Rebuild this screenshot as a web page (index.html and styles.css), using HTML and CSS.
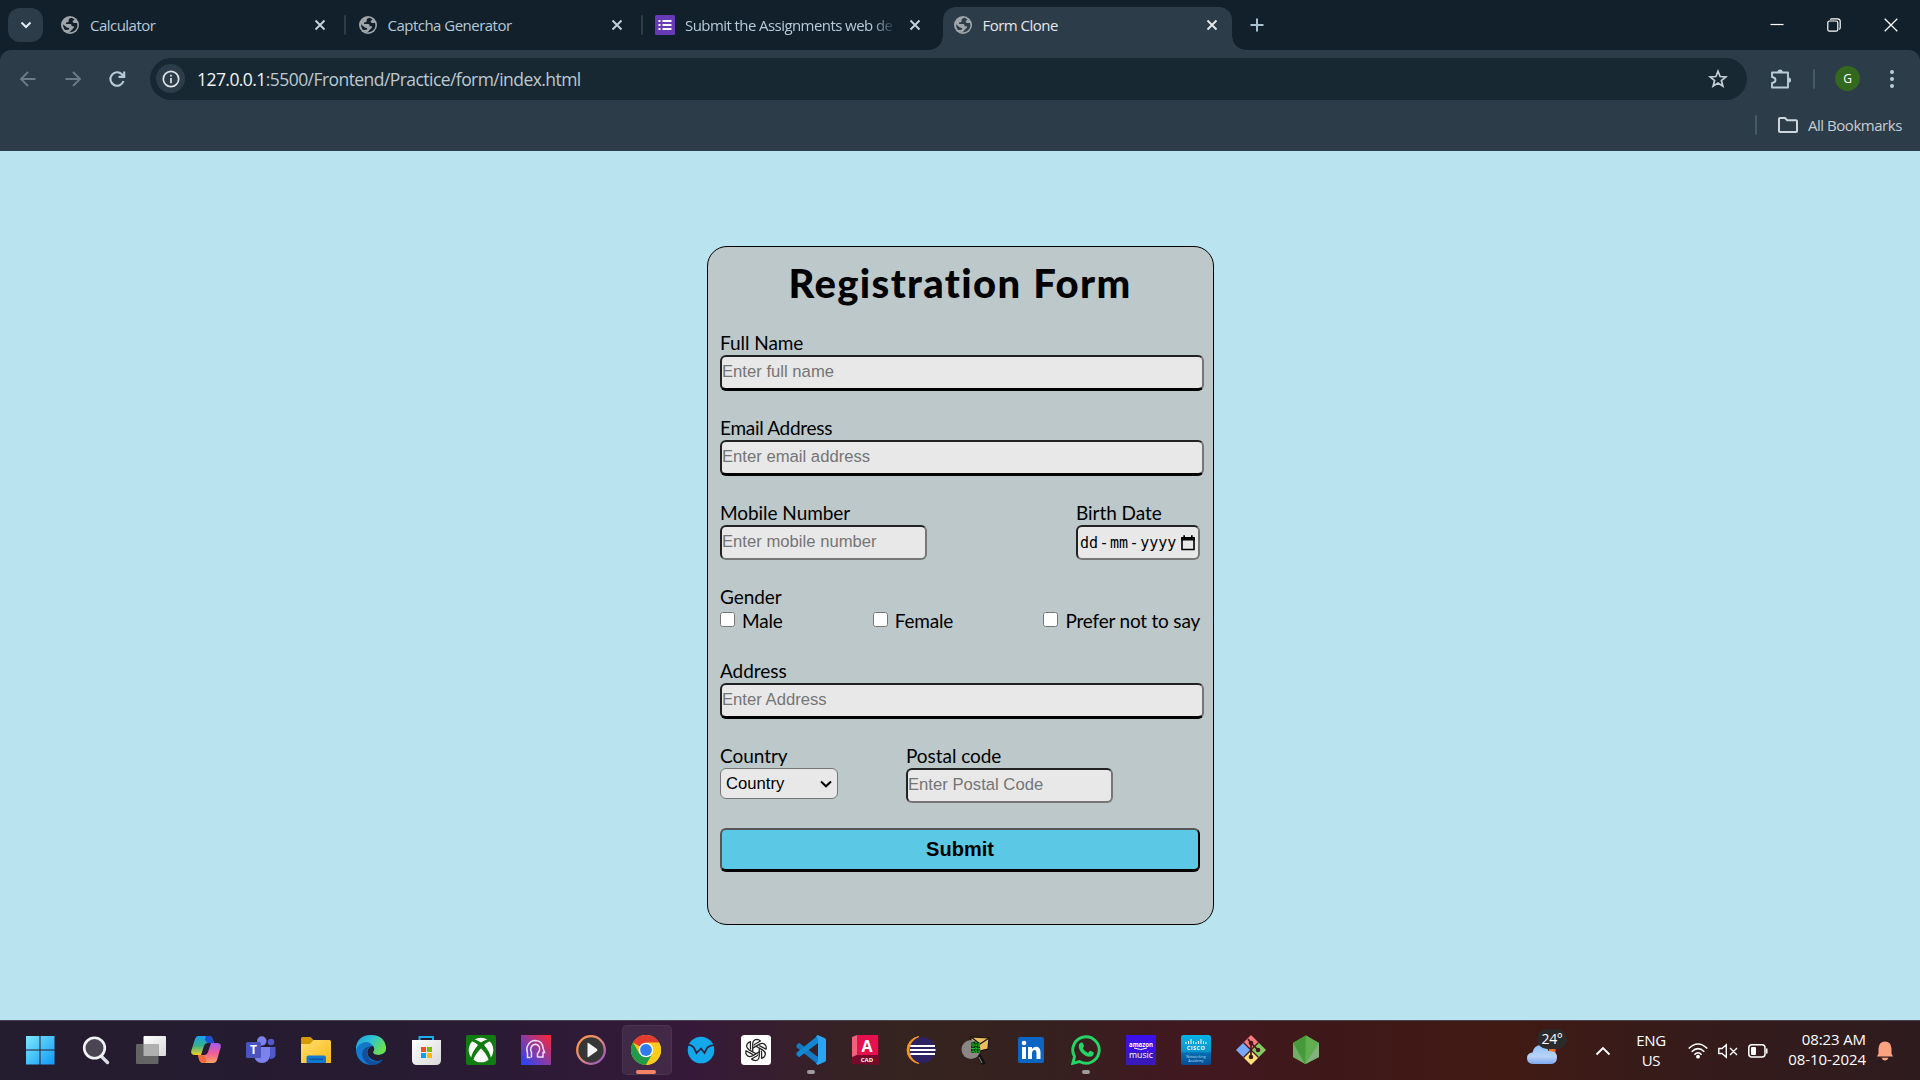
FILE: index.html
```html
<!DOCTYPE html>
<html lang="en">
<head>
<meta charset="utf-8">
<title>Form Clone</title>
<link rel="stylesheet" href="styles.css">
</head>
<body>
<svg class="defs" width="0" height="0">
  <defs>
    <symbol id="globe" viewBox="0 0 18 18">
      <circle cx="9" cy="9" r="9" fill="#a0a5aa"/>
      <path d="M10.500 1.800C8.500 2.100 7.300 3.300 7.600 4.700C7.800 5.700 7 6.200 6 6.200C5 6.300 4.700 7.200 5.200 7.900L9.200 8C10.500 8.200 10.800 9.200 10.600 10.300H12.400C13.300 10.300 13.300 11.300 12.600 12L10.300 14.200C9.800 15.200 9 16 7.800 16.200C6.400 16 5 15.200 4 14L7.500 13.800C8.300 13.500 8.500 12.700 7.800 12L5.800 11.600L2 8.300C2.200 10.500 2.500 12 4 14C6.200 16.500 9.500 16.900 12.300 15.600C16 13.500 17 10.500 16 7H13.200C12 6.800 11.500 6 11.700 5C12.500 4.500 13.300 4.200 13.400 3.300Z" fill="var(--cut)"/>
    </symbol>
    <symbol id="close" viewBox="0 0 12 12"><path d="M1.500 1.500L10.500 10.500M10.500 1.500L1.500 10.500" stroke="currentColor" stroke-width="1.900" fill="none"/></symbol>
    <linearGradient id="win" x1="0" y1="0" x2="1" y2="1"><stop offset="0" stop-color="#7be8fd"/><stop offset="1" stop-color="#1199f8"/></linearGradient>
    <linearGradient id="cpa" x1="0" y1="0" x2="0" y2="1"><stop offset="0" stop-color="#1aa0f0"/><stop offset=".5" stop-color="#35b08c"/><stop offset="1" stop-color="#f2d02a"/></linearGradient>
    <linearGradient id="cpb" x1="0" y1="0" x2="0" y2="1"><stop offset="0" stop-color="#a35af5"/><stop offset=".5" stop-color="#ef5c9a"/><stop offset="1" stop-color="#fda25c"/></linearGradient>
    <linearGradient id="fold" x1="0" y1="0" x2="1" y2="1"><stop offset="0" stop-color="#ffdf70"/><stop offset="1" stop-color="#f9b916"/></linearGradient>
    <linearGradient id="edga" x1="0" y1="0" x2="1" y2=".5"><stop offset="0" stop-color="#1f9fe0"/><stop offset=".5" stop-color="#2fc3d5"/><stop offset="1" stop-color="#6be04d"/></linearGradient>
    <linearGradient id="edgb" x1="0" y1="0" x2="0" y2="1"><stop offset="0" stop-color="#1672bd"/><stop offset="1" stop-color="#0f7fe0"/></linearGradient>
    <linearGradient id="head" x1="0" y1="1" x2="1" y2="0"><stop offset="0" stop-color="#1c45ff"/><stop offset=".5" stop-color="#8f3aa0"/><stop offset="1" stop-color="#ff2430"/></linearGradient>
    <linearGradient id="med" x1="0" y1="0" x2="1" y2="1"><stop offset="0" stop-color="#ff9a3d"/><stop offset=".5" stop-color="#e08a80"/><stop offset="1" stop-color="#8b4fd0"/></linearGradient>
    <linearGradient id="cis" x1="0" y1="0" x2="0" y2="1"><stop offset="0" stop-color="#06b4e6"/><stop offset=".55" stop-color="#0595cf"/><stop offset=".6" stop-color="#056eb0"/><stop offset="1" stop-color="#064c94"/></linearGradient>
    <linearGradient id="cloud" x1="0" y1="0" x2="0" y2="1"><stop offset="0" stop-color="#8fc0fa"/><stop offset=".6" stop-color="#b9d2f8"/><stop offset="1" stop-color="#7fa9ee"/></linearGradient>
    <linearGradient id="grey" x1="0" y1="0" x2="1" y2="1"><stop offset="0" stop-color="#ffffff"/><stop offset="1" stop-color="#d8d8d8"/></linearGradient>
  </defs>
</svg>

<header class="browser">
  <div class="tabstrip">
    <div class="tab-search"><svg width="14" height="14" viewBox="0 0 14 14"><path d="M2.500 4.500L7 9L11.500 4.500" fill="none" stroke="#e3ebf2" stroke-width="2"/></svg></div>
    <div class="tab tab-first"><svg class="fav"><use href="#globe"/></svg><span class="tab-title">Calculator</span><svg class="x"><use href="#close"/></svg></div>
    <div class="tab divided"><svg class="fav"><use href="#globe"/></svg><span class="tab-title">Captcha Generator</span><svg class="x"><use href="#close"/></svg></div>
    <div class="tab divided"><svg class="favbig" viewBox="0 0 20 20"><rect width="20" height="20" rx="1.500" fill="#673ab7"/><path d="M3.500 5h2v2h-2zM3.500 9h2v2h-2zM3.500 13h2v2h-2zM7.500 5h9v2h-9zM7.500 9h9v2h-9zM7.500 13h9v2h-9z" fill="#fff"/></svg><span class="tab-title fade">Submit the Assignments web de</span><svg class="x"><use href="#close"/></svg></div>
    <div class="tab active"><svg class="fav"><use href="#globe"/></svg><span class="tab-title">Form Clone</span><svg class="x"><use href="#close"/></svg></div>
    <svg class="newtab" width="16" height="16" viewBox="0 0 16 16"><path d="M8 1.500V14.500M1.500 8H14.500" stroke="#a9c0d0" stroke-width="2"/></svg>
    <div class="win-controls">
      <svg width="14" height="14" viewBox="0 0 14 14"><path d="M.5 6.500H13.500" stroke="#fff" stroke-width="1.200"/></svg>
      <svg width="14" height="14" viewBox="0 0 14 14" fill="none" stroke="#fff" stroke-width="1.200"><rect x=".8" y="3" width="10" height="10.200" rx="1.800"/><path d="M3.300 1.600Q3.500.8 5 .8H10.500Q13.200.8 13.200 3.500V9.500Q13.200 11 12.200 11.500"/></svg>
      <svg width="14" height="14" viewBox="0 0 14 14"><path d="M.7.700L13.300 13.300M13.300.700L.7 13.300" stroke="#fff" stroke-width="1.300"/></svg>
    </div>
  </div>
  <div class="toolbar">
    <div class="nav">
      <svg width="18" height="18" viewBox="0 0 18 18" fill="none" stroke="#6c7b86" stroke-width="1.900"><path d="M16.500 9H2.500M9 2L2 9L9 16"/></svg>
      <svg width="18" height="18" viewBox="0 0 18 18" fill="none" stroke="#6c7b86" stroke-width="1.900"><path d="M1.500 9H15.500M9 2L16 9L9 16"/></svg>
      <svg width="18" height="18" viewBox="0 0 18 18" fill="none" stroke="#b9cbd8" stroke-width="2.100"><path d="M15.500 11A6.700 6.700 0 1 1 13.900 4.300L16 6.500M16.200 1.500V6.900H10.500"/></svg>
    </div>
    <div class="omnibox">
      <div class="info"><svg width="18" height="18" viewBox="0 0 18 18"><circle cx="9" cy="9" r="7.700" fill="none" stroke="#dfe3e6" stroke-width="1.700"/><path d="M9 8V13.200M9 4.700V6.400" stroke="#dfe3e6" stroke-width="1.700"/></svg></div>
      <div class="url"><span class="host">127.0.0.1</span>:5500/Frontend/Practice/form/index.html</div>
      <svg class="star" width="20" height="20" viewBox="0 0 20 20"><path d="M10 2.200L12.100 7.500L17.900 7.900L13.400 11.500L14.900 17.200L10 14.100L5.100 17.200L6.600 11.500L2.100 7.900L7.900 7.500Z" fill="none" stroke="#c5ced6" stroke-width="1.700"/></svg>
    </div>
    <svg class="puzzle" width="22" height="22" viewBox="0 0 22 22"><path d="M2 4.500H18V19.500H2V15Q5.500 14.500 5.500 12T2 9Z" fill="none" stroke="#b9cdda" stroke-width="1.900" stroke-linejoin="round"/><path d="M7.500 4A2.600 2.600 0 0 1 12.700 4ZM18.500 9.400A2.600 2.600 0 0 1 18.500 14.600Z" fill="#b9cdda"/></svg>
    <i class="sep"></i>
    <div class="avatar">G</div>
    <svg class="menu" width="6" height="20" viewBox="0 0 6 20" fill="#b9cdda"><circle cx="3" cy="3" r="2"/><circle cx="3" cy="10" r="2"/><circle cx="3" cy="17" r="2"/></svg>
  </div>
  <div class="bookmarks">
    <i class="sep"></i>
    <svg width="22" height="18" viewBox="0 0 22 18"><path d="M3 2H8L10.200 4.200H19Q20 4.200 20 5.200V15Q20 16 19 16H3Q2 16 2 15V3Q2 2 3 2Z" fill="none" stroke="#ced6dc" stroke-width="2"/></svg>
    <span class="bm-text">All Bookmarks</span>
  </div>
</header>

<main class="page">
  <form class="card">
    <h1 class="heading">Registration Form</h1>
    <div class="row"><div class="field"><label>Full Name</label><input class="wide" type="text" placeholder="Enter full name"></div></div>
    <div class="row"><div class="field"><label class="snug">Email Address</label><input class="wide" type="text" placeholder="Enter email address"></div></div>
    <div class="row spread">
      <div class="field"><label>Mobile Number</label><input class="short" type="text" placeholder="Enter mobile number"></div>
      <div class="field"><label>Birth Date</label>
        <div class="date"><span>dd</span><span class="dash">-</span><span>mm</span><span class="dash">-</span><span>yyyy</span><svg width="14" height="16" viewBox="0 0 14 16"><path d="M1 3H13V14.500H1Z" fill="none" stroke="#000" stroke-width="1.600"/><path d="M.2 2H13.800V5.500H.2ZM2.300.3H4V2H2.300ZM10 .3H11.700V2H10Z"/></svg></div>
      </div>
    </div>
    <div class="row gender">
      <label>Gender</label>
      <div class="choices">
        <label class="choice"><input type="checkbox">Male</label>
        <label class="choice"><input type="checkbox">Female</label>
        <label class="choice"><input type="checkbox">Prefer not to say</label>
      </div>
    </div>
    <div class="row"><div class="field"><label>Address</label><input class="wide" type="text" placeholder="Enter Address"></div></div>
    <div class="row pair">
      <div class="field"><label>Country</label>
        <div class="select"><span>Country</span><svg width="12" height="8" viewBox="0 0 12 8"><path d="M1 1.500L6 6.300L11 1.500" fill="none" stroke="#000" stroke-width="2"/></svg></div></div>
      <div class="field"><label>Postal code</label><input class="short" type="text" placeholder="Enter Postal Code"></div>
    </div>
    <button class="submit" type="button">Submit</button>
  </form>
</main>

<footer class="taskbar">
  <div class="apps">
    <div class="app"><svg viewBox="0 0 30 30"><path d="M1 1H14.500V14.500H1ZM15.500 1H29.500V14.500H15.500ZM1 15.500H14.500V29.500H1ZM15.500 15.500H29.500V29.500H15.500Z" fill="url(#win)"/></svg></div>
    <div class="app"><svg viewBox="0 0 30 30"><path d="M20 21L26.500 27.500" stroke="#d9dce0" stroke-width="3.400" stroke-linecap="round"/><circle cx="13.500" cy="13" r="10.300" fill="#4c4654" stroke="#f1f3f5" stroke-width="2.600"/></svg></div>
    <div class="app"><svg viewBox="0 0 30 30"><rect x="7.500" y="1" width="22.500" height="20" rx="1" fill="url(#grey)"/><rect x="0" y="9" width="22.500" height="20" rx="1" fill="#646464"/><rect x="7.500" y="9" width="15" height="12" fill="#b0b0b0"/></svg></div>
    <div class="app"><svg viewBox="0 0 30 30"><path d="M6 1H18Q21 1 22 5L23 8H17Q14 8 13 11L10 20H4Q-1 20 .5 15L4 4Q5 1 7 1Z" fill="url(#cpa)"/><path d="M15 1H18Q21 1 22 5L23 8H18Q15 8 14 4Z" fill="#1d4fd0"/><path d="M24 28H12Q9 28 8 24L7 20H13Q16 20 17 17L20 8H26Q31 8 29.500 13L26 25Q25 28 22 28Z" fill="url(#cpb)"/><path d="M7 20H13L15 24Q16 28 13 28Q9 28 8 24Z" fill="#f26a3d"/></svg></div>
    <div class="app"><svg viewBox="0 0 30 30"><circle cx="25" cy="7" r="3.300" fill="#5059c9"/><path d="M19 12H29.500V20Q29 24 24 24Z" fill="#5059c9"/><circle cx="15.800" cy="6" r="4.700" fill="#7b83eb"/><path d="M8 12H24V20Q23 28 16 28Q9 28 8 20Z" fill="#7b83eb"/><rect y="7" width="15" height="16" rx="1.500" fill="#4b53bc"/><text x="7.500" y="19" text-anchor="middle" fill="#fff" font-size="12" font-weight="700" font-family="Open Sans, sans-serif">T</text></svg></div>
    <div class="app"><svg viewBox="0 0 30 30"><path d="M0 8V3.500Q0 2 1.500 2H9.500L13 5.500V9H0Z" fill="#d79a00"/><path d="M0 9H9L12.500 5H28.500Q30 5 30 6.500V28H0Z" fill="url(#fold)"/><path d="M5.500 28V22.500Q5.500 20.500 7.500 20.500H23Q25 20.500 25 22.500V28Z" fill="#0f79cf"/><path d="M8.500 24.200H22" stroke="#084c98" stroke-width="1.200"/></svg></div>
    <div class="app"><svg viewBox="0 0 30 30"><circle cx="15" cy="15" r="15" fill="url(#edgb)"/><path d="M0 12Q2 0 15 0Q28 0 30 12Q30.500 19 23 20Q17 20 17 17Q19 14 17 11Q13 5 6 8Q1.500 10 0 15Z" fill="url(#edga)"/><path d="M17 11Q19.500 14 17 17Q17 20 23 20Q27 20 30.500 16V22L28 24.500Q22 27 17 25Q11 22 11.500 16Q13 11 17 11Z" fill="#241b34"/><path d="M11 16Q11 26 20 26.500Q24 26.500 27.500 24Q23 31 14 30Q7 27 6 19Q7 12 14 11Q11.500 13 11 16Z" fill="#124f9c"/></svg></div>
    <div class="app"><svg viewBox="0 0 30 30"><path d="M8.500 8V2H22V8" fill="none" stroke="#18aef0" stroke-width="2"/><path d="M1 5H30V25Q30 30 25 30H6Q1 30 1 25Z" fill="url(#grey)"/><path d="M10 12h5v5h-5z" fill="#f04e23"/><path d="M16 12h5v5h-5z" fill="#7fbb00"/><path d="M10 18h5v5h-5z" fill="#00a1f1"/><path d="M16 18h5v5h-5z" fill="#ffb900"/></svg></div>
    <div class="app"><svg viewBox="0 0 30 30"><rect width="30" height="30" rx="2" fill="#107c10"/><circle cx="15" cy="15" r="12.300" fill="#fff"/><path d="M6 4Q9 3.500 15 7.500Q21 3.500 24 4L26 6.500Q23 5.500 18 10Q24 17 25 23L23 25.500Q20 18 15 13.500Q10 18 7 25.500L5 23Q6 17 12 10Q7 5.500 4 6.500Z" fill="#107c10"/></svg></div>
    <div class="app"><svg viewBox="0 0 30 30"><rect width="30" height="30" fill="url(#head)"/><g fill="none" stroke="#eadff5" stroke-width="1.500"><path d="M9.500 22.500H6.500V18Q5 14 6.500 11Q9 5.500 14.500 5.500Q21.500 6 22 13L23.500 17.500H22V22H17"/><path d="M10.500 22.500V17.500Q9 15 10 12.500Q11.500 9.300 14.500 9.300Q18.500 9.800 18.700 14Q18.500 17 16.500 18.500V22.500"/></g></svg></div>
    <div class="app"><svg viewBox="0 0 30 30"><circle cx="15" cy="15" r="13.800" fill="#363636" stroke="url(#med)" stroke-width="2.300"/><path d="M11.500 8.500Q11.500 7.500 12.500 8L21 14Q22 15 21 16L12.500 22Q11.500 22.500 11.500 21.500Z" fill="#f4f4f4"/></svg></div>
    <div class="app current"><svg viewBox="0 0 30 30"><circle cx="15" cy="15" r="15" fill="#f9c51d"/><path d="M15 15L2 7.500A15 15 0 0 1 28 7.500Z" fill="#e33b2e"/><path d="M2 7.500A15 15 0 0 0 15 30L21.500 18.700L15 15L8.500 18.700Z" fill="#249a4b"/><path d="M15 7.500H28A15 15 0 0 1 15 30L21.500 18.700Z" fill="#fbcb1e"/><circle cx="15" cy="15" r="7.300" fill="#fff"/><circle cx="15" cy="15" r="5.900" fill="#2f7bf0"/></svg><i class="mark run"></i></div>
    <div class="app"><svg viewBox="0 0 30 30"><circle cx="15" cy="15" r="13.300" fill="#13a8ec"/><path d="M1 10Q6 9 8.500 14L10.500 18L15 13.500L18.500 18L21 13Q24 10 29 10" fill="none" stroke="#33203b" stroke-width="1.700"/></svg></div>
    <div class="app"><svg viewBox="0 0 30 30"><rect width="30" height="30" rx="3.500" fill="#fff"/><g fill="none" stroke="#222" stroke-width="1.250" stroke-linejoin="round"><path id="knot" d="M11.700 16.900V9Q12 4.700 15.700 4.400Q18 4.400 19.400 6L13.800 9.300Q13.200 9.700 13.200 10.400"/><use href="#knot" transform="rotate(60 15 15)"/><use href="#knot" transform="rotate(120 15 15)"/><use href="#knot" transform="rotate(180 15 15)"/><use href="#knot" transform="rotate(240 15 15)"/><use href="#knot" transform="rotate(300 15 15)"/></g></svg></div>
    <div class="app"><svg viewBox="0 0 30 30"><path d="M.5 10L3 7.700L22 22V29.500L.5 12.300Z" fill="#1479c2"/><path d="M.5 20L3 22.300L22 8V.5L.5 17.700Z" fill="#1287d2"/><path d="M21.500 0L28.500 3Q30 3.700 30 5V25Q30 26.300 28.500 27L21.500 30L20 28.500Q22 28 22 25V5Q22 2 20 1.500Z" fill="#2ba5f2"/></svg><i class="mark"></i></div>
    <div class="app"><svg viewBox="0 0 30 30"><path d="M1 2L6 0V20L1 24Z" fill="#f0617c"/><path d="M6 0H27V20H6Z" fill="#e5114f"/><path d="M1 22L6 20H27V0L28 3V30L1 29Z" fill="#760a28"/><text x="16" y="16.500" text-anchor="middle" fill="#fff" font-size="16" font-weight="700" font-family="Open Sans, sans-serif">A</text><text x="16" y="27.200" text-anchor="middle" fill="#fff" font-size="6" font-weight="700" font-family="Open Sans, sans-serif">CAD</text></svg></div>
    <div class="app"><svg viewBox="0 0 30 30"><path d="M13 1.500A13.600 13.600 0 0 0 13 28.500A15 15 0 0 1 13 1.500Z" fill="#f7941e" stroke="#f7941e" stroke-width="1"/><circle cx="16.500" cy="15" r="13" fill="#2e2362"/><path d="M4.300 11H29M4 15H29.500M4.300 19H29" stroke="#fff" stroke-width="2"/></svg></div>
    <div class="app"><svg viewBox="0 0 30 30"><path d="M10 2L28 3L27 14L10 18Z" fill="#e9bd60" stroke="#17120e" stroke-width="1.200"/><path d="M10 2L19 9L28 3" fill="none" stroke="#17120e" stroke-width="1.200"/><path d="M17 19L23 29" stroke="#111" stroke-width="4"/><path d="M18 22L21 28" stroke="#888" stroke-width="1"/><circle cx="10" cy="14.500" r="9.500" fill="#8b8683"/><path d="M10 8Q14 5 19 8V18H10Z" fill="#063c0b"/><path d="M12 8V18M15 7V18M18 8V17M10 10H19M10 13.500H19M10 17H19" stroke="#17c52b" stroke-width="1.200" stroke-dasharray="1.500 1"/></svg></div>
    <div class="app"><svg viewBox="0 0 30 30"><rect x="2" y="2" width="26" height="26" rx="2" fill="#0a66c2"/><circle cx="8" cy="8" r="2.300" fill="#fff"/><path d="M6 12H10V24H6ZM12 12H16V14Q17.500 11.700 20 11.700Q24.500 11.700 24.500 17.500V24H20.500V18Q20.500 15 18.500 15T16 18V24H12Z" fill="#fff"/></svg></div>
    <div class="app"><svg viewBox="0 0 30 30"><path d="M1.800 28.300L3.500 21.500A13.200 13.200 0 1 1 8.500 26.500Z" fill="none" stroke="#25d366" stroke-width="2.900"/><path d="M10 7.500Q11.500 7 12 8.500L13 11Q13 12 11.800 13.200Q13.500 16.500 17 18L18.700 16Q19.300 15.600 20 16L22.800 17.500Q22.500 22 18.500 21.800Q14 21.500 10 17Q7 13 8 9.500Q8.600 8 10 7.500Z" fill="#25d366"/></svg><i class="mark"></i></div>
    <div class="app"><svg viewBox="0 0 30 30"><rect width="30" height="30" fill="#3c10e8"/><rect y="17" width="30" height="13" fill="#38209b" opacity=".6"/><text x="15" y="11.500" textLength="24" lengthAdjust="spacingAndGlyphs" text-anchor="middle" fill="#fff" font-size="7" font-weight="700" font-family="Open Sans, sans-serif">amazon</text><path d="M8 13Q15 16 21 13" fill="none" stroke="#fff" stroke-width="1"/><text x="15" y="22.500" textLength="24" lengthAdjust="spacingAndGlyphs" text-anchor="middle" fill="#fff" font-size="8.500" font-family="Open Sans, sans-serif">music</text></svg></div>
    <div class="app"><svg viewBox="0 0 30 30"><rect width="30" height="30" rx="2.500" fill="url(#cis)"/><path d="M5 7v2M7.500 6v3M10 4v5M12.500 6v3M15 7v2M17.500 6v3M20 4v5M22.500 6v3M25 7v2" stroke="#fff" stroke-width="1"/><text x="15" y="14.800" text-anchor="middle" fill="#fff" font-size="5.500" font-weight="700" letter-spacing=".5" font-family="Open Sans, sans-serif">CISCO</text><text x="15" y="22.500" text-anchor="middle" fill="#b9dcf2" font-size="3.600" font-family="Open Sans, sans-serif">Networking</text><text x="15" y="27.300" text-anchor="middle" fill="#b9dcf2" font-size="3.600" font-family="Open Sans, sans-serif">Academy</text></svg></div>
    <div class="app"><svg viewBox="0 0 30 30"><path d="M15 0L22.500 7.500L15 15L7.500 7.500Z" fill="#f87b80"/><path d="M7.500 7.500L15 15L7.500 22.500L0 15Z" fill="#78a8f8"/><path d="M22.500 7.500L30 15L22.500 22.500L15 15Z" fill="#84cc62"/><path d="M15 15L22.500 22.500L15 30L7.500 22.500Z" fill="#ffdf78"/><path d="M7.500 7.500L22.500 22.500M22.500 7.500L7.500 22.500" stroke="#431719" stroke-width="1.300"/><path d="M12 4L15 8V22M15 8L22 15" fill="none" stroke="#431719" stroke-width="1.700"/><circle cx="15" cy="8" r="2.300" fill="#431719"/><circle cx="15" cy="22" r="2.300" fill="#431719"/><circle cx="22" cy="15" r="2.300" fill="#431719"/></svg></div>
    <div class="app"><svg viewBox="0 0 30 30"><path d="M15 .5L28 8V22L15 29L2 22V8Z" fill="#4f9b43"/><path d="M15 .5L28 8L14 29L2 8Z" fill="#5fae4f"/><path d="M2 8L15 .5L14 29Z" fill="#469a3b"/><path d="M28 8V22L14 29Z" fill="#83b37d"/><path d="M2 8V22L14 29Z" fill="#71ad64"/></svg></div>
  </div>
  <div class="tray">
    <div class="weather"><svg width="31" height="26" viewBox="0 0 31 26"><rect x="22" y="4" width="6.500" height="9" fill="#e86e1c"/><path d="M7 22Q0 22 0 16Q0 11 5.500 10.500Q7 3 14 3Q20 3 21.500 9Q30 8 30 15.500Q30 22 24 22Z" fill="url(#cloud)"/></svg><span class="temp">24°</span></div>
    <svg class="chev" width="16" height="10" viewBox="0 0 16 10"><path d="M1.500 8.500L8 2L14.500 8.500" fill="none" stroke="#fff" stroke-width="1.900"/></svg>
    <div class="lang">ENG<br>US</div>
    <div class="status">
      <svg width="20" height="16" viewBox="0 0 20 16" fill="none" stroke="#fff" stroke-width="1.500"><path d="M.7 5.500Q10-3.500 19.300 5.500M3.700 8.700Q10 2.500 16.300 8.700M6.400 11.700Q10 8 13.600 11.700"/><circle cx="10" cy="13.700" r="1.900" fill="#fff" stroke="none"/></svg>
      <svg width="20" height="16" viewBox="0 0 20 16" fill="none" stroke="#fff" stroke-width="1.400"><path d="M.8 5.500H4L8.300 1.800V14.200L4 10.500H.8ZM12 5L19 12M19 5L12 12"/></svg>
      <svg width="20" height="14" viewBox="0 0 20 14"><rect x=".8" y=".8" width="16.200" height="12.200" rx="3" fill="none" stroke="#fff" stroke-width="1.500"/><rect x="3" y="3" width="5" height="8" rx="1" fill="#fff"/><path d="M18 4.500H19.500V9.500H18Z" fill="#fff"/></svg>
    </div>
    <div class="clock">08:23 AM<br><span class="day">08-10-2024</span></div>
    <svg class="bell" width="16" height="20" viewBox="0 0 16 20"><path d="M0 15.500L1.500 12.500V7.500Q2 .5 8 .5T14.500 7.500V12.500L16 15.500Z" fill="#fba280"/><path d="M4.500 16.700H11.500Q10.500 19.500 8 19.500T4.500 16.700Z" fill="#fba280"/></svg>
  </div>
</footer>
</body>
</html>
```
FILE: styles.css
```css
* { box-sizing: border-box; }
body { margin: 0; width: 1920px; height: 1080px; overflow: hidden; display: flex; flex-direction: column; font-family: "Open Sans", "Noto Sans", sans-serif; background: #b8e3ef; }
svg { display: block; flex: none; }
.defs { position: absolute; }

/* Browser window */
.browser { height: 151px; flex: none; background: #12202c; color: #b6cad8; }
.tabstrip { height: 50px; display: flex; align-items: center; padding-left: 8px; }
.tab-search { width: 35px; height: 34px; border-radius: 12px; background: #2c3c48; display: flex; align-items: center; justify-content: center; }
.tab { --cut: #12202c; width: 297.500px; height: 43px; margin-top: 7px; padding: 0 18px 7px 15px; display: flex; align-items: center; position: relative; }
.tab-first { margin-left: 3px; padding-left: 15px; }
.divided::before { content: ""; position: absolute; left: 0; top: 8px; width: 2px; height: 20px; background: #2c3c48; border-radius: 1px; }
.fav { width: 18px; height: 18px; margin-right: 11px; }
.favbig { width: 20px; height: 20px; margin: 0 10px 0 -1px; }
.tab-title { flex: 1; min-width: 0; overflow: hidden; white-space: nowrap; font-size: 15px; letter-spacing: -0.520px; line-height: 22px; }
.fade { margin-right: 12px; letter-spacing: -0.570px; -webkit-mask-image: linear-gradient(90deg, #000 88%, transparent); mask-image: linear-gradient(90deg, #000 88%, transparent); }
.x { width: 12px; height: 12px; color: #c3d3de; }
.active { --cut: #2c3c48; background: #2c3c48; border-radius: 13px 13px 0 0; width: 289.500px; margin-left: 4px; padding-left: 11px; padding-right: 14px; color: #e3e9ee; }
.active .x { color: #e3e9ee; }
.active::before, .active::after { content: ""; position: absolute; bottom: 0; width: 14px; height: 14px; }
.active::before { left: -14px; background: radial-gradient(circle at 0 0, transparent 13.500px, #2c3c48 14px); }
.active::after { right: -14px; background: radial-gradient(circle at 100% 0, transparent 13.500px, #2c3c48 14px); }
.newtab { margin-left: 17px; }
.win-controls { margin-left: auto; padding-right: 22px; display: flex; gap: 43px; }
.toolbar { height: 57px; display: flex; align-items: center; background: #2c3c48; border-radius: 11px 11px 0 0; padding: 0 25px 0 19px; }
.nav { display: flex; gap: 26.500px; width: 131px; }
.omnibox { width: 1597px; height: 42px; border-radius: 21px; background: #182833; display: flex; align-items: center; padding: 0 19.500px 0 6px; }
.info { width: 29px; height: 29px; border-radius: 50%; background: #2c3c48; display: flex; align-items: center; justify-content: center; }
.url { margin-left: 12px; font-size: 17.500px; letter-spacing: -0.560px; color: #bdc8d0; white-space: nowrap; flex: 1; }
.host { color: #f1f4f6; }
.puzzle { margin-left: 23px; }
.sep { width: 2px; height: 20px; background: #465966; border-radius: 1px; }
.toolbar .sep { margin-left: 21px; }
.avatar { margin-left: 20px; width: 25px; height: 25px; border-radius: 50%; background: #33691e; color: #fff; font-size: 12px; line-height: 25px; text-align: center; }
.menu { margin-left: auto; }
.bookmarks { height: 44px; background: #2c3c48; display: flex; align-items: center; justify-content: flex-end; padding: 0 18px 8px 0; }
.bookmarks svg { margin: 0 9px 0 20px; }
.bm-text { font-size: 15px; letter-spacing: -0.470px; width: 94px; white-space: nowrap; color: #c6ced4; }

/* Form */
.page { flex: 1; background: #b8e3ef; padding: 95px 706px 0 707px; }
.card { height: 679px; border: 1px solid #000; border-radius: 20px; background: #bdc8ca; padding: 0 13px 0 12px; font-family: "Lato", sans-serif; font-size: 19px; color: #000; }
.heading { margin: 0; height: 85px; padding-top: 11px; font-size: 40px; line-height: 50px; text-align: center; font-weight: 900; white-space: nowrap; letter-spacing: 1.350px; word-spacing: 1px; font-variant-ligatures: none; }
.row { height: 85px; }
.row label { display: block; height: 23px; line-height: 22px; white-space: nowrap; letter-spacing: -.05px; }
.row .snug { letter-spacing: -.3px; }
.spread { display: flex; justify-content: space-between; height: 84px; }
.wide, .short { display: block; font: 16.667px "Liberation Sans", Arial, sans-serif; background: #e8e8e8; border: 2px solid; border-color: #222 #767676 #767676 #222; border-radius: 6px; padding: 0 0 2px; margin: 0; }
.wide { width: 484px; height: 36px; border-bottom: 3px solid #000; }
.short { width: 207px; height: 35px; padding-bottom: 1px; }
::placeholder { color: #757575; opacity: 1; }
.date { width: 124px; height: 35px; border: 2px solid; border-color: #222 #767676 #767676 #222; border-radius: 6px; background: #e8e8e8; display: flex; align-items: center; padding-left: 2px; font: 15px "DejaVu Sans Mono", monospace; }
.date .dash { width: 12px; text-align: center; }
.date svg { margin-left: 5px; }
.gender { height: 74px; }
.choices { display: flex; justify-content: space-between; }
.row .choice { display: flex; line-height: 24px; letter-spacing: -.2px; }
.choice input { width: 15px; height: 15px; margin: 3px 7px 0 0; }
.pair { display: flex; gap: 68px; height: 83px; }
.pair .field:first-child { width: 118px; }
.select { height: 31px; border: 1px solid #767676; border-radius: 6px; background: #e8e8e8; display: flex; align-items: center; justify-content: space-between; padding: 0 5px; font: 16.667px "Liberation Sans", Arial, sans-serif; }
.submit { display: block; width: 480px; height: 44px; background: #5bc8e5; border: 2px solid; border-color: #555 #000 #000 #555; border-bottom-width: 3px; border-radius: 6px; padding: 0 0 1px; font: bold 20px "Liberation Sans", Arial, sans-serif; color: #000; }

/* Taskbar */
.taskbar { height: 60px; flex: none; border-top: 1px solid #4a4450; display: flex; background: linear-gradient(90deg, #241c2f 0, #261b31 380px, #301a38 600px, #36193a 690px, #371f2b 790px, #35241f 900px, #35211f 1040px, #421820 1190px, #3e1819 1330px, #421a14 1500px, #371b19 1640px, #2e1b1f 1920px); }
.apps { display: flex; padding: 4px 0 0 14px; }
.app { width: 55px; height: 50px; display: flex; justify-content: center; padding-top: 10px; position: relative; }
.app:first-child { margin: 0 1.500px 0 -2px; }
.app > svg { width: 30px; height: 30px; }
.current::before { content: ""; position: absolute; inset: 0 2px 0 3px; border-radius: 5px; background: rgba(255, 255, 255, .07); border: 1px solid rgba(255, 255, 255, .05); }
.current > svg { position: relative; }
.mark { position: absolute; left: 23.500px; bottom: 1px; width: 8px; height: 4px; border-radius: 2px; background: #a09a9c; }
.run { left: 17px; width: 20px; background: #f58264; }
.tray { margin-left: auto; width: 394px; display: flex; align-items: center; color: #fff; font-size: 15px; line-height: 20px; }
.weather { width: 42px; height: 40px; padding-top: 11px; padding-left: 1px; position: relative; }
.temp { position: absolute; left: 11px; top: -2px; width: 30px; height: 20px; border-radius: 10px; background: #2b2b2b; font-size: 14px; letter-spacing: -.3px; text-align: center; }
.chev { margin-left: 27px; }
.lang { width: 58px; margin-left: 11px; padding-bottom: 2px; text-align: center; letter-spacing: -.4px; }
.status { display: flex; align-items: center; gap: 10px; margin-left: 8px; }
.clock { margin-left: 11px; width: 87px; margin-top: -3px; text-align: right; letter-spacing: -.1px; white-space: nowrap; }
.day { letter-spacing: -.05px; }
.bell { margin-left: 11px; }
```
